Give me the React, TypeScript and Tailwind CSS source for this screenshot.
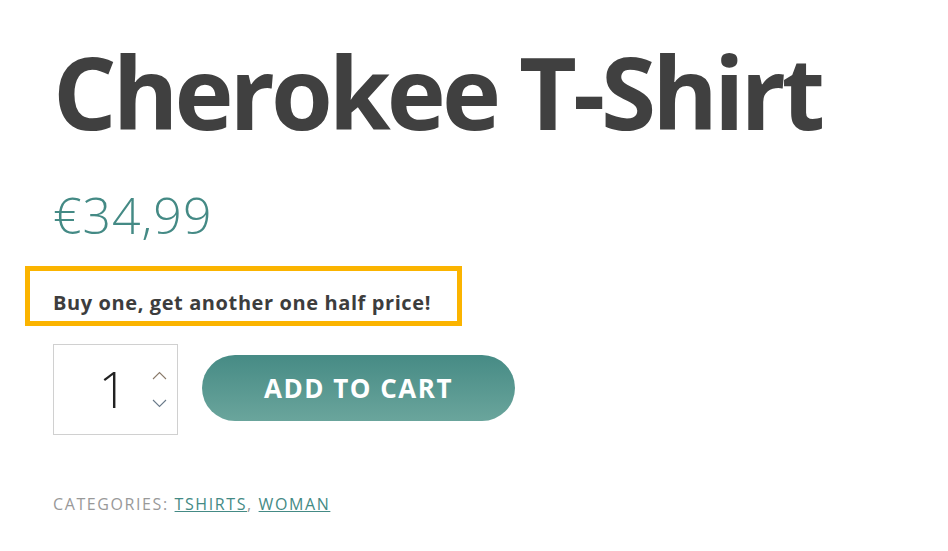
export default function App() {
  return (
    <div className="min-h-screen bg-white pl-[53px] pt-[31px] font-['Open_Sans',sans-serif]">
      {/* Title */}
      <h1 className="text-[100px] leading-[120px] font-bold text-[#404040] tracking-[-4px]">
        Cherokee T-Shirt
      </h1>

      {/* Price */}
      <div className="mt-[34px] text-[50px] leading-[60px] font-light tracking-[1px] text-[#448a85]">
        €34,99
      </div>

      {/* Promo box */}
      <div className="-ml-[28px] mt-[21px] w-[437px] border-[5px] border-[#fbb400] px-[23px] pt-[19px] pb-[5px]">
        <p className="text-[20px] leading-[26px] font-bold tracking-[0.6px] text-[#3d3d3d]">
          Buy one, get another one half price!
        </p>
      </div>

      {/* Quantity + button */}
      <div className="mt-[18px] flex items-center gap-[24px]">
        <div className="flex h-[91px] w-[125px] items-center border border-[#d0d0d0]">
          <span className="flex-1 pl-[20px] text-center text-[50px] font-light text-[#222]">1</span>
          <div className="mr-[10px] flex flex-col gap-[19px]">
            <svg width="15" height="9" viewBox="0 0 15 9" fill="none" stroke="#8a7a6a" strokeWidth="1.1">
              <polyline points="1,8 7.5,1.5 14,8" />
            </svg>
            <svg width="15" height="9" viewBox="0 0 15 9" fill="none" stroke="#6a7a8a" strokeWidth="1.1">
              <polyline points="1,1 7.5,7.5 14,1" />
            </svg>
          </div>
        </div>
        <button className="-mt-[3px] h-[66px] w-[313px] rounded-full bg-gradient-to-b from-[#468b85] to-[#6aa59c] text-[26px] font-bold tracking-[1.5px] text-white">
          ADD TO CART
        </button>
      </div>

      {/* Categories */}
      <div className="mt-[57px] text-[16px] tracking-[1.6px] text-[#999]">
        CATEGORIES:{' '}
        <a href="#" className="text-[#448a85] underline">TSHIRTS</a>,{' '}
        <a href="#" className="text-[#448a85] underline">WOMAN</a>
      </div>
    </div>
  );
}
